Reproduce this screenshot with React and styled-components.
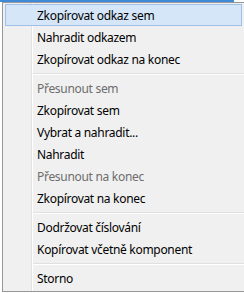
import React from "react";
import styled, { createGlobalStyle } from "styled-components";

const GlobalStyle = createGlobalStyle`
  html, body {
    margin: 0;
    padding: 0;
    background: #ffffff;
    overflow: hidden;
  }
  body {
    font-family: "Noto Sans", "Open Sans", sans-serif;
  }
`;

const items = [
  { label: "Zkopírovat odkaz sem", active: true },
  { label: "Nahradit odkazem" },
  { label: "Zkopírovat odkaz na konec" },
  { sep: true },
  { label: "Přesunout sem", disabled: true },
  { label: "Zkopírovat sem" },
  { label: "Vybrat a nahradit..." },
  { label: "Nahradit" },
  { label: "Přesunout na konec", disabled: true },
  { label: "Zkopírovat na konec" },
  { sep: true },
  { label: "Dodržovat číslování" },
  { label: "Kopírovat včetně komponent" },
  { sep: true },
  { label: "Storno" },
];

const App = () => {
  return (
    <>
      <GlobalStyle />
      <StlPage>
        <StlTitleStrip />
        <StlMenu>
          {items.map((item, i) =>
            item.sep ? (
              <StlSeparator key={i} />
            ) : (
              <StlItem key={i} $active={item.active} $disabled={item.disabled}>
                {item.label}
              </StlItem>
            )
          )}
        </StlMenu>
      </StlPage>
    </>
  );
};

const StlPage = styled.div`
  width: 244px;
  height: 293px;
  display: flex;
  flex-direction: column;
  overflow: hidden;
`;

const StlTitleStrip = styled.div`
  height: 2px;
  width: 234px;
  flex-shrink: 0;
  background: #3f8ad8;
`;

const StlMenu = styled.div`
  margin-left: 2px;
  width: 260px;
  flex-shrink: 0;
  box-sizing: border-box;
  padding: 1px 1px 2px;
  border: 1px solid #979797;
  background: linear-gradient(
    to right,
    #f0f0f0 28px,
    #e2e3e3 28px 29px,
    #ffffff 29px 30px,
    #f0f0f0 30px
  );
  display: flex;
  flex-direction: column;
`;

const StlItem = styled.div`
  height: 22px;
  box-sizing: border-box;
  margin-left: 1px;
  width: 237px;
  padding: 1px 0 0 31px;
  display: flex;
  align-items: center;
  font-size: 12px;
  letter-spacing: -0.3px;
  line-height: 1;
  white-space: nowrap;
  color: ${(p) => (p.$disabled ? "#6d6d6d" : "#000000")};
  border: 1px solid ${(p) => (p.$active ? "#9ec0ea" : "transparent")};
  background: ${(p) => (p.$active ? "#d5e6f8" : "transparent")};
`;

const StlSeparator = styled.div`
  height: 7px;
  margin-left: 29px;
  box-sizing: border-box;
  padding-top: 3px;

  &::before {
    content: "";
    display: block;
    height: 1px;
    background: #e0e0e0;
    border-bottom: 1px solid #ffffff;
  }
`;

export default App;
